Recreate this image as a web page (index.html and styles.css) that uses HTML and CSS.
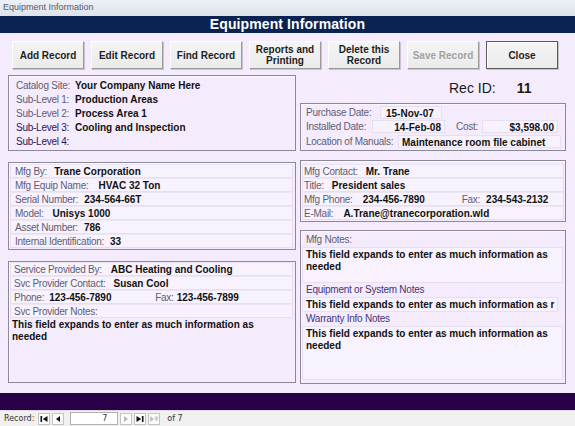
FILE: index.html
```html
<!DOCTYPE html>
<html>
<head>
<meta charset="utf-8">
<link rel="stylesheet" href="styles.css">
</head>
<body>
<div class="app">
  <div class="titlebar">Equipment Information</div>
  <div class="header">Equipment Information</div>
  <div class="toolbar">
    <button class="btn">Add Record</button>
    <button class="btn">Edit Record</button>
    <button class="btn">Find Record</button>
    <button class="btn">Reports and Printing</button>
    <button class="btn">Delete this Record</button>
    <button class="btn disabled">Save Record</button>
    <button class="btn focus">Close</button>
  </div>
  <div class="main">
    <div class="col left">
      <div class="panel p-site">
        <div class="row"><span class="lbl w59">Catalog Site:</span><span class="val">Your Company Name Here</span></div>
        <div class="row"><span class="lbl w59">Sub-Level 1:</span><span class="val">Production Areas</span></div>
        <div class="row"><span class="lbl w59">Sub-Level 2:</span><span class="val">Process Area 1</span></div>
        <div class="row"><span class="lbl dark w59">Sub-Level 3:</span><span class="val">Cooling and Inspection</span></div>
        <div class="row"><span class="lbl dark w59">Sub-Level 4:</span><span class="val"></span></div>
      </div>
      <div class="panel p-mfg">
        <div class="frow"><span class="lbl">Mfg By:</span><span class="val g7">Trane Corporation</span></div>
        <div class="frow"><span class="lbl">Mfg Equip Name:</span><span class="val g10">HVAC 32 Ton</span></div>
        <div class="frow"><span class="lbl">Serial Number:</span><span class="val g6">234-564-66T</span></div>
        <div class="frow"><span class="lbl">Model:</span><span class="val g9">Unisys 1000</span></div>
        <div class="frow"><span class="lbl">Asset Number:</span><span class="val g6">786</span></div>
        <div class="frow"><span class="lbl">Internal Identification:</span><span class="val g6">33</span></div>
      </div>
      <div class="panel p-svc">
        <div class="frow"><span class="lbl">Service Provided By:</span><span class="val g9">ABC Heating and Cooling</span></div>
        <div class="frow"><span class="lbl">Svc Provider Contact:</span><span class="val g8">Susan Cool</span></div>
        <div class="frow"><span class="lbl">Phone:</span><span class="val g5 w106">123-456-7890</span><span class="lbl">Fax:</span><span class="val g3">123-456-7899</span></div>
        <div class="frow"><span class="lbl">Svc Provider Notes:</span></div>
        <div class="notes left-notes">This field expands to enter as much information as needed</div>
      </div>
    </div>
    <div class="col right">
      <div class="recid"><span class="rec-lbl">Rec ID:</span><span class="rec-val">11</span></div>
      <div class="panel p-purchase">
        <div class="row"><span class="lbl w74">Purchase Date:</span><span class="box b-pdate">15-Nov-07</span></div>
        <div class="row"><span class="lbl w67">Installed Date:</span><span class="box b-idate num">14-Feb-08</span><span class="lbl cost">Cost:</span><span class="box b-cost num">$3,598.00</span></div>
        <div class="row"><span class="lbl w92">Location of Manuals:</span><span class="box b-loc">Maintenance room file cabinet</span></div>
      </div>
      <div class="panel p-contact">
        <div class="frow"><span class="lbl">Mfg Contact:</span><span class="val g8">Mr. Trane</span></div>
        <div class="frow"><span class="lbl">Title:</span><span class="val g8">President sales</span></div>
        <div class="frow"><span class="lbl">Mfg Phone:</span><span class="val g10 w99">234-456-7890</span><span class="lbl">Fax:</span><span class="val g6">234-543-2132</span></div>
        <div class="frow"><span class="lbl">E-Mail:</span><span class="val g10">A.Trane@tranecorporation.wld</span></div>
      </div>
      <div class="panel p-notes">
        <div class="nlabel">Mfg Notes:</div>
        <div class="notes nbox n-mfg">This field expands to enter as much information as needed</div>
        <div class="nlabel purple">Equipment or System Notes</div>
        <div class="notes nbox n-eq">This field expands to enter as much information as r</div>
        <div class="nlabel purple">Warranty Info Notes</div>
        <div class="notes nbox n-war">This field expands to enter as much information as needed</div>
      </div>
    </div>
  </div>
  <div class="footer-bar"></div>
  <div class="navbar">
    <span class="nav-lbl">Record:</span>
    <span class="nbtn"><svg width="10" height="10" viewBox="0 0 10 10"><rect x="1.5" y="2" width="1.6" height="6" fill="#111"/><polygon points="8.5,2 8.5,8 3.8,5" fill="#111"/></svg></span>
    <span class="nbtn"><svg width="10" height="10" viewBox="0 0 10 10"><polygon points="7,2 7,8 3,5" fill="#111"/></svg></span>
    <span class="nav-input">7</span>
    <span class="nbtn off"><svg width="10" height="10" viewBox="0 0 10 10"><polygon points="3,2 3,8 7,5" fill="#b8b8b8"/></svg></span>
    <span class="nbtn"><svg width="10" height="10" viewBox="0 0 10 10"><polygon points="1.5,2 1.5,8 6.2,5" fill="#111"/><rect x="6.9" y="2" width="1.6" height="6" fill="#111"/></svg></span>
    <span class="nbtn off"><svg width="10" height="10" viewBox="0 0 10 10"><polygon points="1,2 1,8 5,5" fill="#c0c0c0"/><path d="M7.5 2v5M5.5 3.2l4 2.6M9.5 3.2l-4 2.6" stroke="#c0c0c0" stroke-width="0.9"/></svg></span>
    <span class="nav-of">of 7</span>
  </div>
</div>
</body>
</html>
```

FILE: styles.css
```css
html, body {
  margin: 0;
  padding: 0;
}
body {
  width: 575px;
  height: 426px;
  overflow: hidden;
  font-family: "Liberation Sans", Arial, sans-serif;
  background: #f4ecfc;
}
.app {
  width: 575px;
  height: 426px;
  display: flex;
  flex-direction: column;
  background: #f4ecfc;
}
.titlebar {
  height: 16px;
  line-height: 15px;
  font-size: 9px;
  color: #5a5a5a;
  padding-left: 3px;
  background: linear-gradient(#eef1f6, #dde2ea);
  box-sizing: border-box;
}
.header {
  height: 17px;
  line-height: 17px;
  background: #0b2352;
  color: #ffffff;
  font-weight: bold;
  font-size: 14px;
  text-align: center;
  letter-spacing: 0.1px;
}
.toolbar {
  display: flex;
  gap: 7px;
  padding: 8px 0 0 12px;
  height: 34px;
  box-sizing: border-box;
}
.btn {
  width: 72px;
  height: 28px;
  margin: 0;
  padding: 0 2px;
  font-family: "Liberation Sans", Arial, sans-serif;
  font-weight: bold;
  font-size: 10px;
  line-height: 11px;
  color: #1e1e1e;
  background: linear-gradient(#f4f4f4, #ebebeb);
  border: 1px solid;
  border-color: #ffffff #9a9a9a #9a9a9a #ffffff;
  box-shadow: 1px 1px 0 #c8c2cc;
}
.btn.disabled {
  color: #a2a2a2;
}
.btn.focus {
  border-color: #5a5a5a;
  box-shadow: inset 1px 1px 0 #ffffff, 1px 1px 0 #c8c2cc;
}
.main {
  display: flex;
  gap: 4px;
  padding: 8px 0 0 8px;
  height: 317px;
  box-sizing: border-box;
}
.col {
  display: flex;
  flex-direction: column;
}
.col.left {
  width: 288px;
}
.col.right {
  width: 266px;
}
.panel {
  border: 1px solid #8b8899;
  box-shadow: inset 1px 1px 0 #fbf8ff;
  box-sizing: border-box;
}
.p-site {
  height: 76px;
  padding: 2px 0 0 7px;
}
.p-mfg {
  height: 88px;
  margin-top: 11px;
  padding: 1px 2px 0 1px;
}
.p-svc {
  height: 122px;
  margin-top: 11px;
  padding: 0 2px 0 1px;
}
.row {
  display: flex;
  align-items: center;
  height: 14px;
  font-size: 10px;
  white-space: nowrap;
}
.frow {
  display: flex;
  align-items: center;
  height: 14px;
  font-size: 10px;
  white-space: nowrap;
  padding-left: 4px;
  background: #f7f2fd;
  border: 1px solid #e6dfee;
  border-top-color: #ece6f3;
  box-sizing: border-box;
}
.p-svc .frow {
  padding-left: 3px;
}
.p-contact .frow {
  padding-left: 1px;
}
.lbl {
  color: #625c72;
  font-size: 10px;
  letter-spacing: -0.25px;
}
.lbl.dark {
  color: #2a1550;
}
.val {
  font-weight: bold;
  color: #111111;
}
.w59 { width: 59px; flex: none; }
.w67 { width: 66px; flex: none; }
.w74 { width: 74px; flex: none; }
.w92 { width: 92px; flex: none; }
.w99 { width: 99px; flex: none; }
.w106 { width: 106px; flex: none; }
.g3 { margin-left: 3px; }
.g5 { margin-left: 5px; }
.g6 { margin-left: 6px; }
.g7 { margin-left: 7px; }
.g8 { margin-left: 8px; }
.g9 { margin-left: 9px; }
.g10 { margin-left: 10px; }
.notes {
  font-size: 10px;
  font-weight: bold;
  color: #111111;
  line-height: 12px;
}
.left-notes {
  width: 262px;
  padding: 1px 0 0 2px;
}
.recid {
  height: 28px;
  display: flex;
  align-items: center;
  padding-left: 149px;
  padding-bottom: 2px;
  box-sizing: border-box;
  font-size: 14px;
  color: #1a1a1a;
}
.rec-val {
  font-weight: bold;
  margin-left: 21px;
}
.p-purchase {
  height: 48px;
  padding: 1px 0 0 5px;
}
.p-purchase .row {
  height: 14.5px;
}
.box {
  height: 13px;
  line-height: 13px;
  font-weight: bold;
  color: #111111;
  background: #f7f2fd;
  border: 1px solid #e6dfee;
  box-sizing: border-box;
  padding: 0 3px;
}
.box.num {
  text-align: right;
}
.b-pdate { width: 62px; padding-left: 5px; }
.b-idate { width: 73px; }
.b-cost { width: 76px; }
.b-loc { width: 163px; }
.lbl.cost {
  width: 37px;
  padding-left: 11px;
  box-sizing: border-box;
  flex: none;
}
.p-contact {
  height: 62px;
  margin-top: 9px;
  padding: 3px 1px 0 1px;
}
.p-notes {
  height: 154px;
  margin-top: 8px;
  padding: 2px 2px 0 1px;
}
.nlabel {
  height: 14px;
  line-height: 14px;
  font-size: 10px;
  letter-spacing: -0.25px;
  color: #625c72;
  padding-left: 4px;
}
.nlabel.purple {
  color: #463575;
}
.nbox {
  background: #f7f2fd;
  border: 1px solid #e6dfee;
  box-sizing: border-box;
  padding: 0 0 0 3px;
  overflow: hidden;
}
.n-mfg {
  height: 36px;
  padding-top: 1px;
}
.n-eq {
  height: 15px;
  white-space: nowrap;
  width: 256px;
  padding-top: 1px;
}
.n-war {
  height: 54px;
  padding-top: 1px;
}
.footer-bar {
  height: 17px;
  margin-top: 9px;
  background: #2a0049;
}
.navbar {
  height: 16px;
  background: #f0f0f0;
  border-top: 1px solid #dcdcdc;
  box-sizing: border-box;
  display: flex;
  align-items: center;
  padding-left: 4px;
  font-family: "DejaVu Sans", sans-serif;
  font-size: 8px;
  color: #333333;
}
.nav-lbl {
  margin-right: 4px;
}
.nbtn {
  width: 12px;
  height: 12px;
  display: flex;
  align-items: center;
  justify-content: center;
  border: 1px solid #c4c4c4;
  background: #fbfbfb;
  box-sizing: border-box;
  margin-right: 2px;
}
.nav-input {
  width: 48px;
  height: 13px;
  line-height: 12px;
  border: 1px solid #b0b0b0;
  background: #ffffff;
  box-sizing: border-box;
  text-align: right;
  padding-right: 10px;
  margin: 0 2px 0 4px;
}
.nav-of {
  margin-left: 5px;
}
```
